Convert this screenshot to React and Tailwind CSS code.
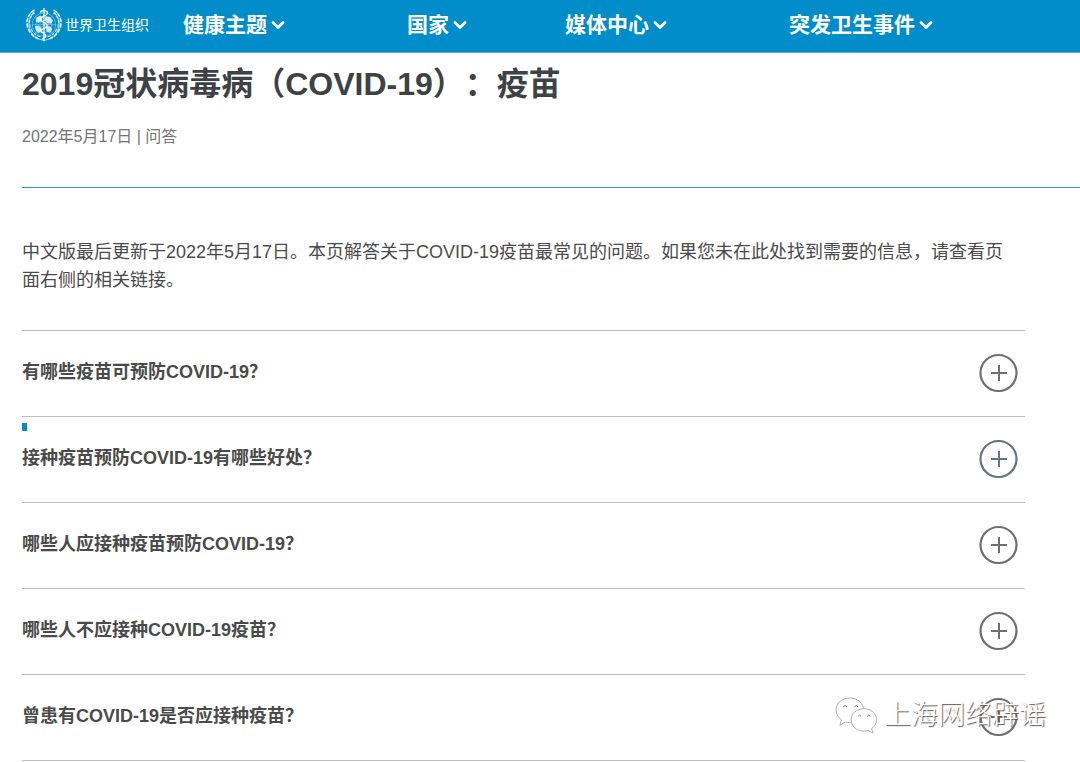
import { useState } from "react";

const NAV = ["健康主题", "国家", "媒体中心", "突发卫生事件"];

const QUESTIONS = [
  { text: "有哪些疫苗可预防COVID-19？" },
  { text: "接种疫苗预防COVID-19有哪些好处？", marked: true },
  { text: "哪些人应接种疫苗预防COVID-19？" },
  { text: "哪些人不应接种COVID-19疫苗？" },
  { text: "曾患有COVID-19是否应接种疫苗？" },
];

const LEAVES = [
  [18, 42, 20], [12, 38, 45], [7.5, 32, 62], [5, 25, 85], [5, 18, 105], [7.5, 11.5, 125], [12, 6.5, 145],
];

function Laurel() {
  return (
    <g>
      <path d="M27 45C14 42 6 33 7 21c.4-5 3-10 7-14" fill="none" stroke="#fff" strokeWidth=".9" />
      {LEAVES.map(([x, y, a]) => (
        <g key={a} transform={`translate(${x} ${y}) rotate(${a})`}>
          <ellipse cx="0" cy="0" rx="3.4" ry="1.1" fill="#fff" opacity=".9" />
          <ellipse cx="1" cy="-3.4" rx="2.6" ry=".8" fill="#fff" opacity=".8" />
        </g>
      ))}
    </g>
  );
}

function Emblem() {
  return (
    <svg viewBox="2 1 50 47" className="h-[36px] w-[38px] shrink-0" aria-hidden="true">
      <Laurel />
      <g transform="translate(54 0) scale(-1 1)">
        <Laurel />
      </g>
      <g fill="none" stroke="#fff" strokeWidth=".7" opacity=".65">
        <circle cx="27" cy="24" r="15.5" />
        <circle cx="27" cy="24" r="10.5" />
        <circle cx="27" cy="24" r="5.5" />
        <path d="M11.5 24h31M16 13l22 22M38 13L16 35" />
      </g>
      <path
        d="M17 15l5-3 3 2-1 5-4 3-4-2zM29 13l6 1 4 5-3 4-5-1-3-4zM15 26l5-1 4 4-1 5-4 1-3-4zM30 26l5 0 3 4-3 5-5-2z"
        fill="#fff"
        opacity=".8"
      />
      <path d="M27 2v44" stroke="#fff" strokeWidth="1.6" />
      <path
        d="M22 8c2-4 10-3 9.500 1-.5 4-9 4-9 8s8.500 4 8.500 8-7.500 4-7.500 7.500 6 3 6 6-4 3-5 5"
        fill="none"
        stroke="#fff"
        strokeWidth="1.8"
      />
    </svg>
  );
}

function Chevron() {
  return (
    <svg viewBox="0 0 14 10" className="h-[10px] w-[14px] shrink-0" aria-hidden="true">
      <path
        d="M2 2.500L7 7.500 12 2.500"
        fill="none"
        stroke="#fff"
        strokeWidth="2.800"
        strokeLinecap="round"
        strokeLinejoin="round"
      />
    </svg>
  );
}

function PlusCircle({ open, tinted }) {
  return (
    <svg
      viewBox="0 0 40 40"
      className={`size-10 shrink-0 ${tinted ? "text-[#5f7580]" : "text-[#6f6f6f]"}`}
      aria-hidden="true"
    >
      <circle cx="20.500" cy="20" r="18" fill="none" stroke="currentColor" strokeWidth="2.200" />
      <path d={open ? "M13 20h16" : "M13 20h16M21 12v16"} stroke="currentColor" strokeWidth="2" />
    </svg>
  );
}

function ChatBubbles() {
  return (
    <svg viewBox="0 0 44 38" className="h-[37px] w-[43px] shrink-0" aria-hidden="true">
      <g fill="#fff" stroke="#a3a3a3" strokeWidth=".9" strokeLinejoin="round">
        <path d="M15 1C7 1 1 6.500 1 13.500c0 4 2 7.500 5.500 9.800L5 29l5.500-3.200c1.500.4 3 .6 4.500.6 8 0 14.500-5.500 14.500-12.900C29.500 6.500 23 1 15 1z" />
        <path d="M29.500 12C22 12 16.500 17 16.500 23.500S22 35 29.500 35c1.500 0 3-.2 4.500-.6l5 2.600-1.500-4.600c3.200-2 5-5.200 5-8.900C42.500 17 37 12 29.500 12z" />
      </g>
      <g fill="none" stroke="#777" strokeWidth="1">
        <path d="M8.500 10.500q1.800-3.400 3.600 0M20 10.500q1.800-3.400 3.600 0M23.500 20q1.600-3 3.200 0M33 20q1.600-3 3.200 0" />
      </g>
    </svg>
  );
}

function Question({ text, marked }) {
  const [open, setOpen] = useState(false);
  return (
    <li className="relative border-b border-[#bdbdbd]">
      {marked && <span className="absolute left-0 top-1.5 h-2 w-[5px] bg-[#008dc9]" />}
      <button
        type="button"
        aria-expanded={open}
        onClick={() => setOpen(!open)}
        className="flex h-[85px] w-full items-center justify-between pr-[7px] pb-0.5 text-left text-lg font-bold text-[#4a4a4a]"
      >
        <span className="pb-0.5">{text}</span>
        <PlusCircle open={open} tinted={marked} />
      </button>
    </li>
  );
}

export default function App() {
  return (
    <div className="relative overflow-hidden bg-white font-['Liberation_Sans','Noto_Sans_CJK_SC',sans-serif] text-[#4a4a4a] [text-spacing-trim:space-all]">
      <header className="flex h-[53px] items-center border-b border-[#4db0dc] bg-[#008dc9] pb-0.5 pl-[25px] text-white">
        <a href="#home" className="flex w-[158px] shrink-0 items-center gap-0.5 text-sm">
          <Emblem />
          <span className="whitespace-nowrap">世界卫生组织</span>
        </a>
        <nav className="grid grow grid-cols-[224fr_158fr_224fr_291fr]">
          {NAV.map((label) => (
            <button
              key={label}
              type="button"
              className="flex items-center gap-1 whitespace-nowrap text-[21px] leading-8 font-bold"
            >
              {label}
              <Chevron />
            </button>
          ))}
        </nav>
      </header>

      <main className="pl-[22px]">
        <div className="border-b border-[#2b9fd2] pt-2 pb-[38px]">
          <h1 className="text-[32px] leading-[46px] font-bold text-[#3c4245]">
            2019冠状病毒病（COVID-19）：疫苗
          </h1>
          <p className="mt-[18px] text-base leading-6 text-[#757575]">2022年5月17日 | 问答</p>
        </div>

        <div className="pr-[55px]">
          <p className="pt-[50px] pr-2 pb-9 text-lg leading-7">
            中文版最后更新于2022年5月17日。本页解答关于COVID-19疫苗最常见的问题。如果您未在此处找到需要的信息，请查看页面右侧的相关链接。
          </p>
          <ul className="border-t border-[#bdbdbd]">
            {QUESTIONS.map((q) => (
              <Question key={q.text} {...q} />
            ))}
          </ul>
        </div>
      </main>

      <div className="pointer-events-none absolute right-[34px] bottom-[26px] flex items-center gap-1.5">
        <ChatBubbles />
        <span className="text-[27px] leading-10 font-light whitespace-nowrap text-white [text-shadow:1px_1px_1px_#555]">
          上海网络辟谣
        </span>
      </div>
    </div>
  );
}
